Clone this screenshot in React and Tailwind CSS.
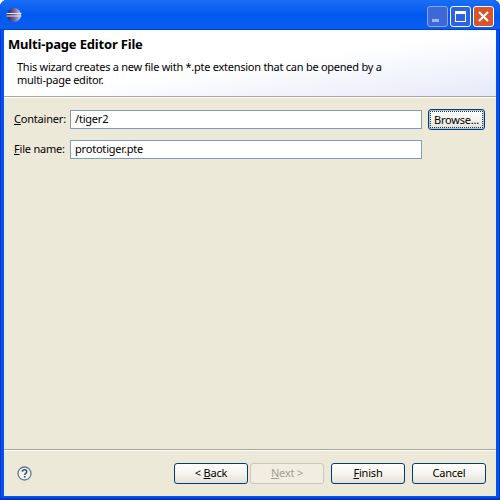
const font = { fontFamily: '"Noto Sans", "Liberation Sans", sans-serif' };

function Btn({ children, disabled, focus }) {
  if (disabled) {
    return (
      <div className="w-[74px] h-[21px] rounded-[3px] border border-[#c9c7ba] bg-[#f1eee1] flex items-center justify-center text-[#a19f92] text-[11px] tracking-[-0.2px]">
        <span>{children}</span>
      </div>
    );
  }
  if (focus) {
    return (
      <div className="w-[57px] h-[21px] rounded-[3px] border border-[#003c74] bg-gradient-to-b from-[#ffffff] via-[#f5f4ee] to-[#e4e1d6] p-[1px] shadow-[inset_0_0_0_1px_#a9c3e8] flex text-black text-[11px] tracking-[-0.2px]">
        <span className="flex-1 border border-dotted border-[#333] flex items-center justify-center leading-none">{children}</span>
      </div>
    );
  }
  return (
    <div className="w-[74px] h-[21px] rounded-[3px] border border-[#003c74] bg-gradient-to-b from-[#ffffff] via-[#f5f4ee] to-[#e4e1d6] flex items-center justify-center text-black text-[11px] tracking-[-0.2px]">
      <span>{children}</span>
    </div>
  );
}

function Field({ children }) {
  return (
    <div className="flex-1 h-[19px] border border-[#7f9db9] bg-white pl-[4px] flex items-center text-[11px] text-black">
      {children}
    </div>
  );
}

function Logo() {
  return (
    <svg width="16" height="16" viewBox="0 0 16 16">
      <defs>
        <linearGradient id="e" x1="0" y1="0" x2="1" y2="0">
          <stop offset="0" stopColor="#2c2255" />
          <stop offset="0.5" stopColor="#6a5fa0" />
          <stop offset="1" stopColor="#cfc9e6" />
        </linearGradient>
      </defs>
      <circle cx="8" cy="8" r="7" fill="url(#e)" />
      <rect x="0.5" y="6" width="15" height="1" fill="#e8e8f4" />
      <rect x="0.5" y="8.5" width="15" height="1" fill="#e8e8f4" />
    </svg>
  );
}

function Help() {
  return (
    <svg width="15" height="15" viewBox="0 0 15 15">
      <circle cx="7.5" cy="7.5" r="6.5" fill="#f4f3ec" stroke="#64789c" strokeWidth="1.3" />
      <path d="M5.3 5.8C5.4 4.4 6.4 3.8 7.5 3.8c1.3 0 2.3.8 2.3 1.9 0 1.6-2.1 1.6-2.1 3.2" fill="none" stroke="#33507f" strokeWidth="1.5" />
      <rect x="6.9" y="10" width="1.6" height="1.6" fill="#33507f" />
    </svg>
  );
}

export default function App() {
  return (
    <div className="w-[500px] h-[500px] bg-[#0055e8] shadow-[inset_1px_0_0_#0831d9,inset_-1px_0_0_#0831d9,inset_0_-2px_0_#0a2fb8] flex flex-col rounded-t-[7px] overflow-hidden" style={font}>
      <div className="h-[30px] shrink-0 bg-gradient-to-b from-[#1a6ef5] via-[#0058ee] to-[#0a5ff0] shadow-[inset_0_-1px_0_#0040c8] flex items-center pl-[6px] pr-[6px]">
        <Logo />
        <div className="flex-1" />
        <div className="flex gap-[2px] self-start mt-[6px]">
          <div className="w-[21px] h-[21px] rounded-[3px] border border-[#8da6e8] bg-[#3d68d8] flex items-end pl-[4px] pb-[4px]">
            <div className="w-[7px] h-[3px] bg-[#9fb4ec]" />
          </div>
          <div className="w-[21px] h-[21px] rounded-[3px] border border-white bg-[#2e62e4] flex items-center justify-center">
            <div className="w-[11px] h-[11px] border border-white border-t-[3px]" />
          </div>
          <div className="w-[21px] h-[21px] rounded-[3px] border border-white bg-[#d9532c] flex items-center justify-center">
            <svg width="13" height="13" viewBox="0 0 13 13">
              <path d="M2 2l9 9M11 2l-9 9" stroke="#fff" strokeWidth="2.2" />
            </svg>
          </div>
        </div>
      </div>
      <div className="flex-1 flex flex-col mx-[4px] mb-[4px] bg-[#ece9d8] min-h-0">
        <div className="h-[66px] shrink-0 bg-gradient-to-br from-white via-white to-[#e6eaf8] pl-[4px] pt-[5px] text-black">
          <div className="text-[13px] font-bold leading-[18px] h-[18px] tracking-[-0.18px]">Multi-page Editor File</div>
          <div className="pl-[9px] pt-[7px] text-[11px] leading-[13px] tracking-[-0.26px]">
            <div>This wizard creates a new file with *.pte extension that can be opened by a</div>
            <div>multi-page editor.</div>
          </div>
        </div>
        <div className="h-[1px] bg-[#aca899] shrink-0" />
        <div className="h-[1px] bg-white shrink-0" />
        <div className="flex-1 flex flex-col gap-[10px] pl-[10px] pr-[11px] pt-[11px] text-[11px] text-black tracking-[-0.2px]">
          <div className="flex items-center">
            <div className="w-[56px] shrink-0"><u>C</u>ontainer:</div>
            <Field>/tiger2</Field>
            <div className="w-[6px] shrink-0" />
            <Btn focus>Browse...</Btn>
          </div>
          <div className="flex items-center pr-[63px]">
            <div className="w-[56px] shrink-0"><u>F</u>ile name:</div>
            <Field>prototiger.pte</Field>
          </div>
        </div>
        <div className="h-[1px] bg-[#aca899] shrink-0" />
        <div className="h-[1px] bg-white shrink-0" />
        <div className="h-[45px] shrink-0 flex items-center pl-[13px] pr-[10px]">
          <Help />
          <div className="flex-1" />
          <div className="flex gap-[2px] mr-[7px]">
            <Btn>{"< "}<u>B</u>ack</Btn>
            <Btn disabled><u>N</u>ext {">"}</Btn>
          </div>
          <div className="flex gap-[7px]">
            <Btn><u>F</u>inish</Btn>
            <Btn>Cancel</Btn>
          </div>
        </div>
      </div>
    </div>
  );
}
